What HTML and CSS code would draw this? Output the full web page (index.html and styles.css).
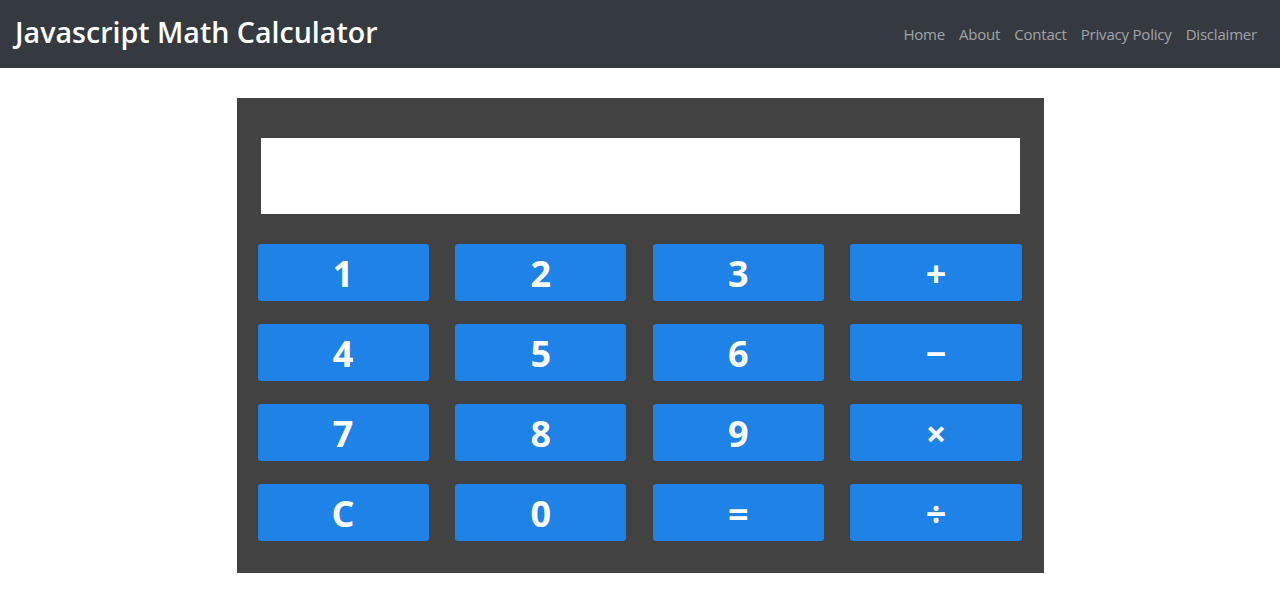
FILE: index.html
```html
<!DOCTYPE html>
<html lang="en">
<head>
<meta charset="utf-8">
<title>Javascript Math Calculator</title>
<link rel="stylesheet" href="styles.css">
</head>
<body>
<header class="navbar">
  <a class="brand" href="#">Javascript Math Calculator</a>
  <nav class="nav">
    <a href="#">Home</a>
    <a href="#">About</a>
    <a href="#">Contact</a>
    <a href="#">Privacy Policy</a>
    <a href="#">Disclaimer</a>
  </nav>
</header>
<main class="main">
  <div class="calc">
    <div class="display"></div>
    <div class="keys">
      <button class="key">1</button>
      <button class="key">2</button>
      <button class="key">3</button>
      <button class="key">+</button>
      <button class="key">4</button>
      <button class="key">5</button>
      <button class="key">6</button>
      <button class="key">&minus;</button>
      <button class="key">7</button>
      <button class="key">8</button>
      <button class="key">9</button>
      <button class="key">&times;</button>
      <button class="key">C</button>
      <button class="key">0</button>
      <button class="key">=</button>
      <button class="key">&divide;</button>
    </div>
  </div>
</main>
</body>
</html>
```
FILE: styles.css
```css
* { box-sizing: border-box; }
body {
  margin: 0;
  font-family: "Open Sans", "Noto Sans", sans-serif;
  background: #fff;
}
.navbar {
  height: 68px;
  background: #343a40;
  display: flex;
  align-items: center;
  justify-content: space-between;
  padding: 0 16px 0 15px;
}
.brand {
  color: #fff;
  text-decoration: none;
  font-size: 28.6px;
  font-weight: 600;
  margin-top: -5px;
}
.nav {
  display: flex;
  margin-top: -1px;
}
.nav a {
  color: rgba(255,255,255,0.55);
  text-decoration: none;
  font-size: 15px;
  padding: 0 7px;
  letter-spacing: -0.2px;
}
.main {
  display: flex;
  justify-content: center;
  padding-top: 30px;
}
.calc {
  width: 807px;
  height: 475px;
  background: #424242;
  padding: 40px 22px 0 21px;
}
.display {
  height: 76px;
  margin: 0 2px 30px 3px;
  background: #fff;
}
.keys {
  display: grid;
  grid-template-columns: repeat(4, 1fr);
  column-gap: 26.5px;
  row-gap: 23px;
}
.key {
  height: 57px;
  border: none;
  border-radius: 3px;
  background: #1f82e6;
  color: #fff;
  font-family: "Open Sans", "Noto Sans", sans-serif;
  font-weight: 700;
  font-size: 36px;
  line-height: 1;
  padding: 3px 0 0 0;
  cursor: pointer;
}
```
